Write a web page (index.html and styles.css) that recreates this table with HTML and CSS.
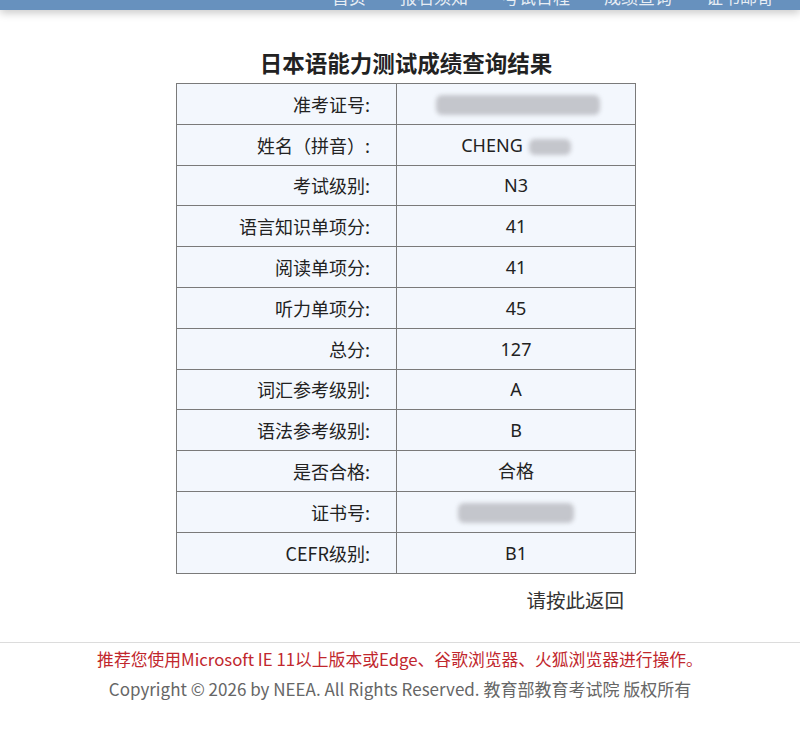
FILE: index.html
```html
<!DOCTYPE html>
<html lang="zh-CN">
<head>
<meta charset="utf-8">
<title>日本语能力测试成绩查询结果</title>
<link rel="stylesheet" href="styles.css">
</head>
<body>
<header class="topbar">
  <nav class="nav">
    <span class="nav-item">首页</span>
    <span class="nav-item">报名须知</span>
    <span class="nav-item">考试日程</span>
    <span class="nav-item">成绩查询</span>
    <span class="nav-item">证书邮寄</span>
  </nav>
</header>
<main class="main">
  <h1 class="title">日本语能力测试成绩查询结果</h1>
  <table class="score">
    <tr><td class="label">准考证号:</td><td class="value"><span class="blur blur-id"></span></td></tr>
    <tr><td class="label">姓名（拼音）:</td><td class="value"><span class="name">CHENG</span><span class="blur blur-name"></span></td></tr>
    <tr><td class="label">考试级别:</td><td class="value">N3</td></tr>
    <tr><td class="label">语言知识单项分:</td><td class="value">41</td></tr>
    <tr><td class="label">阅读单项分:</td><td class="value">41</td></tr>
    <tr><td class="label">听力单项分:</td><td class="value">45</td></tr>
    <tr><td class="label">总分:</td><td class="value">127</td></tr>
    <tr><td class="label">词汇参考级别:</td><td class="value">A</td></tr>
    <tr><td class="label">语法参考级别:</td><td class="value">B</td></tr>
    <tr><td class="label">是否合格:</td><td class="value">合格</td></tr>
    <tr><td class="label">证书号:</td><td class="value"><span class="blur blur-cert"></span></td></tr>
    <tr><td class="label">CEFR级别:</td><td class="value">B1</td></tr>
  </table>
  <div class="back-row"><a class="back">请按此返回</a></div>
</main>
<footer class="footer">
  <p class="tip">推荐您使用Microsoft IE 11以上版本或Edge、谷歌浏览器、火狐浏览器进行操作。</p>
  <p class="copy">Copyright © 2026 by NEEA. All Rights Reserved. 教育部教育考试院 版权所有</p>
</footer>
</body>
</html>
```
FILE: styles.css
```css
html, body {
  margin: 0;
  padding: 0;
  background: #fff;
  font-family: "Noto Sans", "Noto Sans CJK SC", sans-serif;
  color: #222;
}
.topbar {
  height: 10px;
  background: #6791be;
  overflow: hidden;
  box-shadow: 0 3px 8px rgba(0, 0, 0, 0.22);
  position: relative;
}
.nav {
  display: flex;
  justify-content: flex-end;
  gap: 34px;
  padding-right: 26px;
  height: 10px;
  align-items: flex-end;
}
.nav-item {
  color: rgba(255, 255, 255, 0.85);
  font-size: 17px;
  line-height: 17px;
  margin-bottom: 5px;
  font-family: "Noto Sans CJK SC", sans-serif;
}
.main {
  width: 460px;
  margin: 0 0 0 176px;
  padding-top: 37px;
}
.title {
  margin: 0 0 6px;
  font-size: 22.5px;
  line-height: 30px;
  font-weight: bold;
  text-align: center;
  color: #222;
  font-family: "Noto Sans CJK SC", sans-serif;
}
.score {
  width: 460px;
  border-collapse: collapse;
  background: #f3f7fd;
}
.score td {
  border: 1px solid #7a7a7a;
  height: 39.8px;
  padding: 0;
  font-size: 18px;
  line-height: 20px;
}
.label {
  width: 193px;
  text-align: right;
  padding-right: 26px !important;
  font-family: "Noto Sans CJK SC", sans-serif;
}
.value {
  text-align: center;
  font-family: "Noto Sans", "Noto Sans CJK SC", sans-serif;
}
.blur {
  display: inline-block;
  vertical-align: middle;
  background: #c4c6cc;
  border-radius: 6px;
  filter: blur(2px);
}
.blur-id {
  width: 164px;
  height: 20px;
  margin-left: -80px;
  position: relative;
  left: 42px;
}
.blur-name {
  width: 42px;
  height: 16px;
  margin-left: 6px;
}
.blur-cert {
  width: 116px;
  height: 20px;
}
.back-row {
  display: flex;
  justify-content: flex-end;
  padding: 13px 12px 0 0;
}
.back {
  font-size: 19.5px;
  line-height: 26px;
  color: #333;
  font-family: "Noto Sans CJK SC", sans-serif;
}
.footer {
  margin-top: 29px;
  border-top: 1px solid #dcdcdc;
  text-align: center;
}
.tip {
  margin: 5px 0 0;
  font-size: 16.8px;
  line-height: 22px;
  color: #c1272d;
  font-family: "Noto Sans CJK SC", sans-serif;
}
.copy {
  margin: 8px 0 0;
  font-size: 17px;
  line-height: 22px;
  color: #666;
  font-family: "Noto Sans CJK SC", sans-serif;
}
```
